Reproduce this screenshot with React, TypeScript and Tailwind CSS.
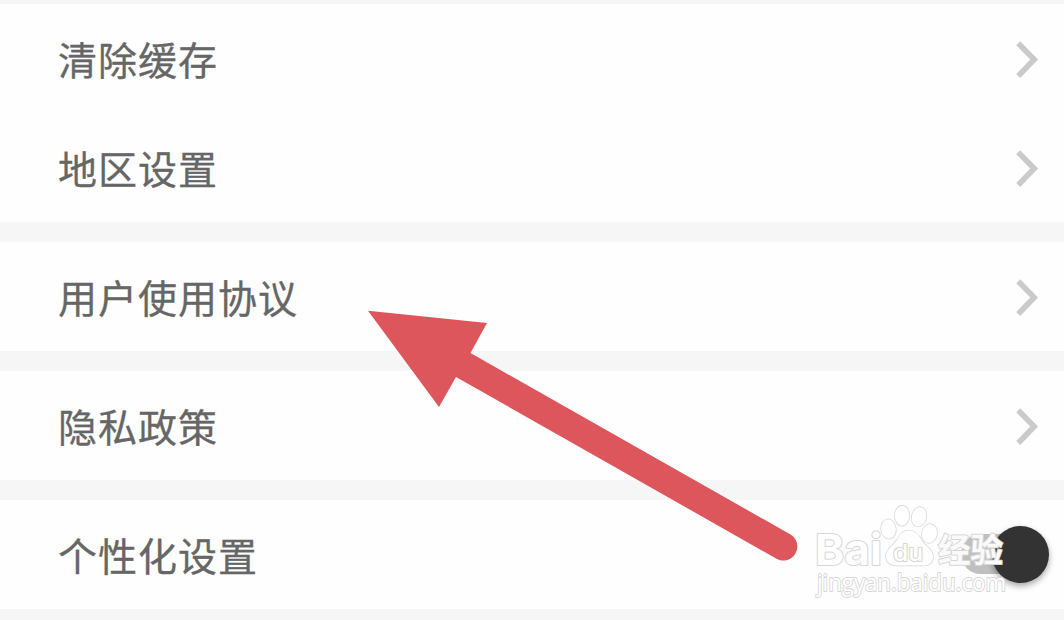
import React from 'react';

interface SettingItem {
  label: string;
  type: 'link' | 'toggle';
}

const SETTING_GROUPS: SettingItem[][] = [
  [
    { label: '清除缓存', type: 'link' },
    { label: '地区设置', type: 'link' },
  ],
  [{ label: '用户使用协议', type: 'link' }],
  [{ label: '隐私政策', type: 'link' }],
  [{ label: '个性化设置', type: 'toggle' }],
];

const Chevron: React.FC = () => (
  <svg className="w-6 h-10 mr-[25px] shrink-0" viewBox="0 0 24 40" fill="none">
    <path d="M3.2 4.2L19.2 20.5L3.2 37" stroke="#cacaca" strokeWidth="5.6" />
  </svg>
);

const Toggle: React.FC = () => (
  <div className="w-[89px] h-[58px] mr-[15px] mb-px flex items-center justify-end shrink-0">
    <div className="w-[70px] h-10 rounded-full bg-[#bfbfbf]" />
    <div className="w-[57px] h-[57px] -ml-[39px] shrink-0 rounded-full bg-[#333333] shadow-[0_3px_6px_rgba(0,0,0,0.35)]" />
  </div>
);

const SettingRow: React.FC<{ item: SettingItem }> = ({ item }) => (
  <div className="h-[109px] pl-[58px] flex items-center justify-between">
    <span className="text-[39px] leading-[54px] tracking-[1px] pb-[2px] text-[#666666] [-webkit-text-stroke:0.3px_#666666]">{item.label}</span>
    {item.type === 'link' ? <Chevron /> : <Toggle />}
  </div>
);

const Arrow: React.FC = () => (
  <svg className="absolute left-0 top-0 w-[1064px] h-[620px]" viewBox="0 0 1064 620">
    <path
      d="M368 310.7L487 323L470.5 353L791 534.8A14 14 0 0 1 777 559L456 377L439 407Z"
      fill="#dc565c"
    />
  </svg>
);

const Watermark: React.FC = () => (
  <svg
    className="absolute left-[806px] top-[500px] w-[210px] h-[104px] font-['Open_Sans','Noto_Sans_CJK_SC',sans-serif]"
    viewBox="806 500 210 104"
    fill="#ffffff"
    stroke="#d6d6d6"
    strokeWidth="2"
    strokeLinejoin="round"
    paintOrder="stroke"
  >
    <text className="font-['Inter',sans-serif]" x="815" y="564.5" fontSize="43" fontWeight="700" textLength="67" lengthAdjust="spacingAndGlyphs">Bai</text>
    {/* Paw */}
    <g strokeWidth="1.5">
      <ellipse cx="888.5" cy="529" rx="7.3" ry="9.7" transform="rotate(-8 888.5 529)" />
      <ellipse cx="902" cy="515.7" rx="7.2" ry="10" />
      <ellipse cx="919" cy="516.8" rx="7.2" ry="9.8" transform="rotate(12 919 516.8)" />
      <ellipse cx="929.5" cy="533.5" rx="7.5" ry="9.5" transform="rotate(10 929.5 533.5)" />
      <path d="M908.5 530.5C915 530.5 919 535 922 541C926 547 933 549 933 557C933 563 929 565.5 922 565.5H898C890 565.5 886 562 886 556C886 549 893 546 897 540C900 534 903 530.5 908.5 530.5Z" />
    </g>
    <text className="font-['Inter',sans-serif]" x="893" y="560.5" fontSize="23" fontWeight="500" textLength="30" lengthAdjust="spacingAndGlyphs">du</text>
    <text className="font-['Noto_Sans_CJK_SC',sans-serif]" x="938" y="562" fontSize="33" fontWeight="700" textLength="65" lengthAdjust="spacingAndGlyphs" fill="#fafafa" strokeWidth="2">经验</text>
    <text x="817" y="590.5" fontSize="23" textLength="189" lengthAdjust="spacingAndGlyphs" strokeWidth="1.8">jingyan.baidu.com</text>
  </svg>
);

const App: React.FC = () => {
  return (
    <div className="relative w-[1064px] h-[620px] overflow-hidden bg-[#f6f6f6] pt-1 font-['Noto_Sans_CJK_SC',sans-serif]">
      <div className="flex flex-col gap-5">
        {SETTING_GROUPS.map((group) => (
          <div key={group[0].label} className="bg-[#fefefe]">
            {group.map((item) => (
              <SettingRow key={item.label} item={item} />
            ))}
          </div>
        ))}
      </div>
      <Arrow />
      <Watermark />
    </div>
  );
};

export default App;
